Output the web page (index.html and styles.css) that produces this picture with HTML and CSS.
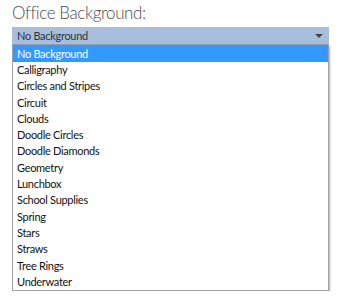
FILE: index.html
```html
<!DOCTYPE html>
<html lang="en">
<head>
<meta charset="UTF-8" />
<title>Office Background</title>
<link rel="stylesheet" href="styles.css">
</head>
<body>
<div class="panel">
  <h2 class="label">Office Background:</h2>
  <div class="select">
    <span class="value">No Background</span>
    <span class="arrow"></span>
  </div>
  <ul class="options">
    <li class="selected">No Background</li>
    <li>Calligraphy</li>
    <li>Circles and Stripes</li>
    <li>Circuit</li>
    <li>Clouds</li>
    <li>Doodle Circles</li>
    <li>Doodle Diamonds</li>
    <li>Geometry</li>
    <li>Lunchbox</li>
    <li>School Supplies</li>
    <li>Spring</li>
    <li>Stars</li>
    <li>Straws</li>
    <li>Tree Rings</li>
    <li>Underwater</li>
  </ul>
</div>
</body>
</html>
```

FILE: styles.css
```css
html,body {margin:0;padding:0;background:#fff;font-family:Lato,"Open Sans",sans-serif;color:#222;}
.panel {padding:3px 8px 0 12px;width:317px;}
.label {margin:0 0 4px;font-size:17px;font-weight:300;letter-spacing:-0.4px;color:#4a4a4a;line-height:20px;}
.select {
  background:#a7bfdd;border-bottom:1px solid #8f9fb3;height:17px;display:flex;align-items:center;justify-content:space-between;
  padding:0 6px 0 5px;font-size:11px;letter-spacing:-0.3px;color:#333;
}
.arrow {width:0;height:0;border-left:4px solid transparent;border-right:4px solid transparent;border-top:4px solid #444;}
.options {
  list-style:none;margin:0;padding:0;border:1px solid #a0a0a0;border-top:none;background:#fff;
  box-shadow:1px 1px 0 #c8c8c8,2px 2px 0 #e6e6e6;font-size:11px;letter-spacing:-0.3px;
}
.options li {height:16.3px;line-height:16.3px;padding:0 4px;color:#111;}
.options li.selected {background:#3399ff;color:#fff;height:17px;line-height:17px;}
```
